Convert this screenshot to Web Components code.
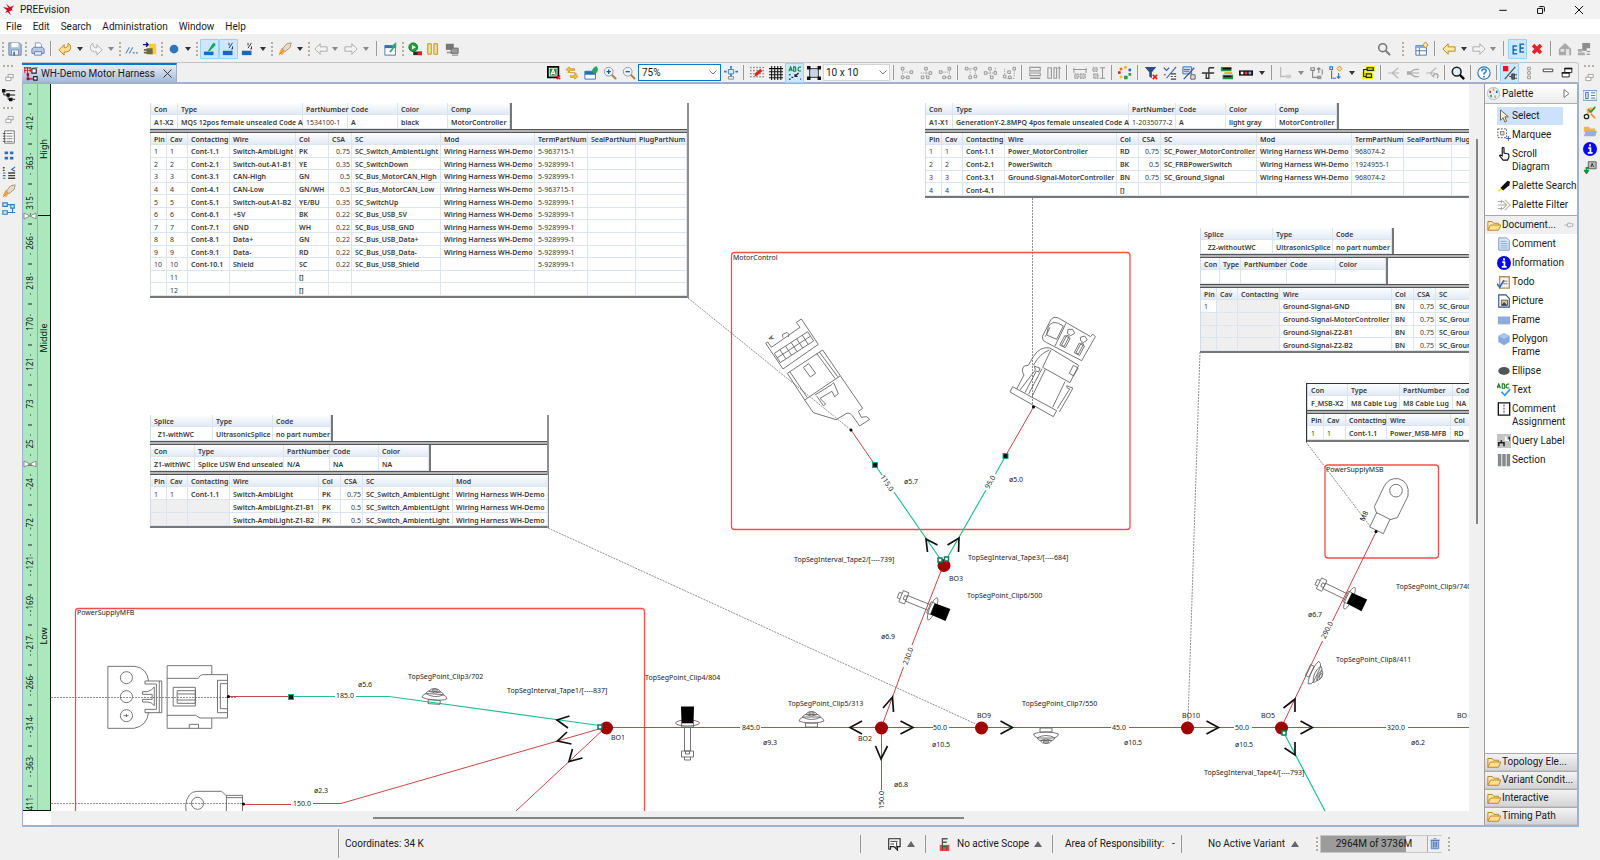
<!DOCTYPE html>
<html lang="en">
<head>
<meta charset="utf-8">
<title>PREEvision</title>
<style>
html,body{height:100%;margin:0}
body{font:10px/12px Roboto,"Liberation Sans",sans-serif;color:#1a1a1a;background:#f0f0f0;overflow:hidden}
</style>
</head>
<body>
<app-window></app-window>
<script>
const ICONS = {
  bird:'<path d="M1 5 8 6 5 1 10 5 15 3 12 7 13 9 9 10 11 15 7 11 4 12 6 9Z" fill="#c8102e"/>',
  save:'<path d="M1 1h12l2 2v12H1z" fill="#a9bfd8" stroke="#5c7fa5"/><path d="M4 1h8v5H4z" fill="#fff"/><path d="M4 9h8v6H4z" fill="#eef3f8" stroke="#6889ab"/><path d="M6 11h2v4H6z" fill="#4d7196"/>',
  print:'<path d="M5 1h5l2 2v5H5z" fill="#fff" stroke="#7d93b8"/><path d="M1 8 3 6h10l2 2v5H1z" fill="#b9c8e2" stroke="#5f7db0"/><path d="M4 11h8v4H4z" fill="#e4ebf7" stroke="#5f7db0"/>',
  undo:'<path d="M1 9 7 3v3.500h2Q12 6 11.500 1.500 15 3 14.500 7 14 11.500 7 11.500V15z" fill="#ffdf8f" stroke="#b67d10"/>',
  redo:'<path d="M15 9 9 3v3.500H7Q4 6 4.500 1.500 1 3 1.500 7 2 11.500 9 11.500V15z" fill="#f4f4f4" stroke="#a9a9a9"/>',
  lines:'<path d="M1 13 5 6M5 13 9 6" stroke="#5b8cc0" stroke-width="1.200"/><path d="M9 12.500h2M12.500 12.500h2" stroke="#3c78b4" stroke-width="1.500"/>',
  plug:'<path d="M7 2h8v12H7z" fill="#f2cf3a"/><path d="M0 3h6M3.500 0.500 6 3 3.500 5.500" stroke="#101080" fill="none" stroke-width="1.500"/><path d="M4 7h7v7H4zM1 8h3v2H1zM1 11h3v2H1z" fill="#6b6b45"/>',
  dot:'<circle cx="8" cy="8" r="5" fill="#2d76b8"/>',
  pen:'<path d="M1 11h11v4H1z" fill="#0d6fd0"/><path d="M5 11 7 8 11 2q2-2 3 0t-1 3L8 10z" fill="#18a85c"/>',
  frac:'<path d="M1 10h11v5H1z" fill="#1d66bd"/><path d="M8 1v3M12 1 8 7M12 5v3h-1.500" stroke="#222" fill="none"/>',
  rocket:'<path d="M1 13 4 7 9 6 8 11 4 14z" fill="#f0a43a"/><path d="M5 8 10 2 15 1 14 6 8 11z" fill="#e7dcca" stroke="#a98a61"/><path d="M1 15 4 12M4 15l2-2" stroke="#e8792a"/>',
  back:'<path d="M1 8 7 2v3.500h8v5H7V14z" fill="#f4f4f4" stroke="#a3a3a3"/>',
  fwd:'<path d="M15 8 9 2v3.500H1v5h8V14z" fill="#f4f4f4" stroke="#a3a3a3"/>',
  backy:'<path d="M1 8 7 2v3.500h8v5H7V14z" fill="#ffe9ad" stroke="#b67d10"/>',
  ext:'<path d="M1 4h12v11H1z" fill="#fff" stroke="#3a6ea5"/><path d="M1 4h12v3H1z" fill="#3a6ea5"/><path d="M6 11 10 6 8 5 14 0 14 7 12 6 8 12z" fill="#3aa569"/>',
  win:'<path d="M1 6h12v9H1z" fill="#fff" stroke="#2470b8"/><path d="M1 6h12v4H1z" fill="#2470b8"/><path d="m9 5 2-3 3-2 2 3-1 5-2-1-2 2z" fill="#27a567"/>',
  run:'<circle cx="6" cy="6" r="5" fill="#21a03c" stroke="#0e6a22"/><path d="M4.500 3.500 9 6 4.500 8.500z" fill="#fff"/><path d="M6 11h10v4H6z" fill="#282828"/><path d="M11 11h5v4h-5z" fill="#d92020"/>',
  pause:'<path d="M2 2h4v12H2zM9 2h4v12H9z" fill="#f7df8b" stroke="#b58a1a"/>',
  monitors:'<path d="M1 2h9v7H1z" fill="#777"/><path d="M2 11h6v2H2z" fill="#999"/><path d="M7 7h8v6H7z" fill="#9a9a9a" stroke="#666"/><path d="M8 15h7" stroke="#777"/>',
  search:'<circle cx="6.500" cy="6.500" r="4.500" fill="none" stroke="#777" stroke-width="1.800"/><path d="m10 10 5 5" stroke="#777" stroke-width="2.200"/>',
  searchb:'<circle cx="6.500" cy="6.500" r="5" fill="#dff1f5" stroke="#222" stroke-width="1.800"/><path d="m10 10 5 5" stroke="#000" stroke-width="2.800"/>',
  persp:'<path d="M1 4h12v11H1z" fill="#fff" stroke="#3a6ea5"/><path d="M1 4h12v3H1z" fill="#86aed6"/><path d="M5 7v8M1 10h12" stroke="#3a6ea5"/><path d="m12 0 3 3.500-3 3.500-3-3.500z" fill="#ffe59a" stroke="#b68a20"/>',
  ee:'<path d="M7 4.500H2.500v9H7M2.500 9h4M15 2.500h-4.500v9H15M10.500 7h4" stroke="#1d72b8" stroke-width="1.800" fill="none"/>',
  redx:'<path d="M2 5 5 2 8 5 11 2 14 5 11 8 14 11 11 14 8 11 5 14 2 11 5 8z" fill="#e8242a"/>',
  home:'<path d="M1 8 8 1l7 7v7H1z" fill="#a8a8a8"/><path d="M3 8h4v3H3zM9 8h4v7H9z" fill="#e4e4e4"/>',
  cubes:'<path d="M6 1h9v6h-4v3H6z" fill="#8d8d8d"/><path d="M1 8h5v3H1zM1 12h8v3H1z" fill="#aaa"/><path d="M11 11h4M11 14h4" stroke="#777"/>',
  harness:'<path d="M9 2h5v5H9zM11 11h4v4h-4z" fill="#fff" stroke="#222" stroke-width="1.300"/><path d="M4.500 8v5.500H11" stroke="#8c1830" fill="none" stroke-width="1.500"/><path d="M0 1h8M0 4h3M5 4h3M1 0v7M4 0v8M7 0v6M10 0h6" stroke="#d02040" stroke-width="1.200"/><path d="M3 7h3v3H3zM3 12h3v3H3z" fill="#8c1830"/>',
  close:'<path d="m3 3 10 10M13 3 3 13" stroke="#333" stroke-width="1.200"/>',
  label:'<path d="M1 1h12v12H1z" fill="#fff" stroke="#000" stroke-width="2"/><path d="M3 3h8v8H3z" fill="#2e8a35"/><path d="m4.500 10 2.500-6 2.500 6M5 8.500h4" stroke="#fff" fill="none" stroke-width="1.300"/><path d="m11 11 4 4M15 11l-4 4" stroke="#e21b1b" stroke-width="1.800"/>',
  swap:'<path d="M1 4 5 1v2h6v2H5v2zM15 12l-4-3v2H6v2h5v2zM3 7.500h8l3 2" fill="#f6c342" stroke="#b9851c" stroke-width=".7"/>',
  zoomin:'<circle cx="6.500" cy="6.500" r="5" fill="#f2f8ff" stroke="#8a8a9a"/><path d="M4 6.500h5M6.500 4v5" stroke="#1b4fae" stroke-width="1.500"/><path d="m10 10 5 5" stroke="#a8844a" stroke-width="2.200"/>',
  zoomout:'<circle cx="6.500" cy="6.500" r="5" fill="#f2f8ff" stroke="#8a8a9a"/><path d="M4 6.500h5" stroke="#1b4fae" stroke-width="1.500"/><path d="m10 10 5 5" stroke="#a8844a" stroke-width="2.200"/>',
  fit:'<path d="M5 4h6v5H5z" fill="#d6e9fb" stroke="#2f7cc4"/><path d="M0 6.500h3M13 6.500h3M8 0v3M8 9v3" stroke="#2f7cc4" stroke-width="2"/><path d="M5 12h6v3H5z" fill="#e8e8e8" stroke="#888"/>',
  redpen:'<path d="M1 1v14M4.500 1v14M8 1v14M11.500 1v14M15 1v14" stroke="#333" stroke-dasharray="1.500 2"/><path d="m5 12 1-4 6-5 2 3-6 5z" fill="#e3201b"/>',
  grid:'<path d="M3 0v16M6.500 0v16M10 0v16M13.500 0v16M0 3h16M0 6.500h16M0 10h16M0 13.500h16" stroke="#111" stroke-width="1.200"/>',
  abc:'<path d="M1 6 3 1 5 6M2 4.500h2M6.500 1v5h2q1-1 0-2.500.5-1.500-.5-2.500zM15 1.500q-3-1-3.500 2t3.500 2" stroke="#16801c" fill="none" stroke-width="1.200"/><path d="M1 10h2M4 13h2M1 15h2M12 8 8 12M8 9v3h3M14 15h1" stroke="#222" stroke-width="1.400" fill="none"/>',
  frame:'<path d="M3 3h10v10H3z" fill="#c9d5e4" stroke="#222"/><path d="M0 0h4v4H0zM12 0h4v4h-4zM0 12h4v4H0zM12 12h4v4h-4z" fill="#111"/>',
  al1:'<path d="M1.500 1.500h3v3h-3zM11.500 5.500h3v3h-3zM1.500 11.500h3v3h-3zM7.500 11.500h3v3h-3z" fill="none" stroke="#8d8d8d"/><path d="M3 5v6M5 7h6M5 13h2" stroke="#999" stroke-dasharray="1.500 1"/>',
  al2:'<path d="M6.500 1.500h3v3h-3zM11.500 6.500h3v3h-3zM2.500 11.500h3v3h-3zM8.500 11.500h3v3h-3z" fill="none" stroke="#8d8d8d"/><path d="M8 5v7M2 8h9" stroke="#999" stroke-dasharray="1.500 1"/>',
  al3:'<path d="M11.500 1.500h3v3h-3zM1.500 5.500h3v3h-3zM11.500 11.500h3v3h-3zM5.500 11.500h3v3h-3z" fill="none" stroke="#8d8d8d"/><path d="M13 5v6M5 7h7M9 13h2" stroke="#999" stroke-dasharray="1.500 1"/>',
  al4:'<path d="M1.500 1.500h3v3h-3zM5.500 11.500h3v3h-3zM11.500 10.500h3v3h-3zM11.500 1.500h3v3h-3z" fill="none" stroke="#8d8d8d"/><path d="M5 3h6M7 4v7M13 5v5" stroke="#999" stroke-dasharray="1.500 1"/>',
  al5:'<path d="M1.500 6.500h3v3h-3zM6.500 1.500h3v3h-3zM12.500 6.500h3v3h-3zM8.500 11.500h3v3h-3z" fill="none" stroke="#8d8d8d"/><path d="M5 8h7M8 5v7M14 2v4" stroke="#999" stroke-dasharray="1.500 1"/>',
  al6:'<path d="M1.500 10.500h3v3h-3zM6.500 5.500h3v3h-3zM12.500 1.500h3v3h-3zM7.500 11.500h3v3h-3z" fill="none" stroke="#8d8d8d"/><path d="M3 3v7M5 14h10M14 5v8" stroke="#999" stroke-dasharray="1.500 1"/>',
  same1:'<path d="M2 1.500h12v4H2zM2 8h12v3H2z" fill="none" stroke="#999" stroke-width="1.300"/><path d="M2 14h12" stroke="#888" stroke-width="1.500"/>',
  same2:'<path d="M1 2h4v12H1zM8 2h3v12H8z" fill="none" stroke="#999" stroke-width="1.300"/><path d="M14 1v14M12.500 3 14 1l1.500 2" stroke="#888" fill="none"/>',
  dist:'<path d="M1 2v6M15 2v6M1 4h14" stroke="#888"/><path d="M2 9h4v5H2zM8 9h6v5H8z" fill="#ccc" stroke="#888" stroke-dasharray="2 1"/>',
  distv:'<path d="M9 2h6M9 14h6M12 2v12" stroke="#888"/><path d="M1 2h5v4H1zM2 9h5v5H2z" fill="#ccc" stroke="#888" stroke-dasharray="2 1"/>',
  wheel:'<path d="M7 0h3v3H7z" fill="#f0b020"/><path d="M2 2h3v3H2z" fill="#f07020"/><path d="M0 6h3v3H0z" fill="#e02020"/><path d="M2 11h3v3H2z" fill="#f0c030"/><path d="M12 3h3v3h-3z" fill="#3060d0"/><path d="M12 8h3v3h-3zM7 11h4v4H7z" fill="#20a040"/>',
  filterx:'<path d="M1 1h13L9 7v7l-3-2V7z" fill="#2c4a90"/><path d="m10 10 5 5M15 10l-5 5" stroke="#e21b1b" stroke-width="2"/>',
  linkn:'<path d="M1 2l3 3 3-3M4 14 15 1" stroke="#3a62a8" stroke-width="1.300" fill="none"/><path d="M9 9h6M9 12h2M13 12h2M9 15h6M1 10h2" stroke="#444" stroke-width="1.300"/>',
  notel:'<path d="M1 1h10v8H1z" fill="#cfe0f5" stroke="#3a62a8"/><path d="M2 4h7M2 6h6" stroke="#3a62a8"/><path d="M2 15 14 2" stroke="#3a62a8" stroke-width="1.500"/><path d="M10 10h5v5h-5z" fill="#ddd" stroke="#555"/>',
  tree4:'<path d="M1 8h5v6M9 2v12H5M9 2h6M6 8h9" stroke="#333" stroke-width="1.500" fill="none"/>',
  greensw:'<path d="M1 1h12v5H1zM3 10h12v5H3z" fill="#1e9940"/><path d="M3 3h10M4 12h9" stroke="#111" stroke-width="1.800"/><path d="M5 8h9" stroke="#e0b020" stroke-width="2"/>',
  chain:'<path d="M0 5h16v6H0z" fill="#111"/><path d="M2 6.500h3v3H2z" fill="#fff"/><path d="M6.500 6.500h3v3h-3z" fill="#e64040"/><path d="M11 6.500h3v3h-3z" fill="#7fb1f0"/>',
  route1:'<path d="M3 1v11h6" stroke="#bbb" stroke-width="1.500" fill="none"/><path d="M9 10h6v4H9z" fill="#ccc"/>',
  route2:'<path d="M1 2h4v3H1zM3 5v8h5M10 2v6M8 4l2-2 2 2M14 4v6" stroke="#888" stroke-width="1.300" fill="none"/><path d="M8 11h5v4H8z" fill="#999"/>',
  route3:'<path d="M1 1h3v3H1zM3 5v9h5M11 8v6M9 12l2 2 2-2" stroke="#3a78c0" stroke-width="1.300" fill="none"/><path d="m12 0 3 3-3 3-3-3z" fill="#ffe59a" stroke="#b68a20"/>',
  route4:'<path d="M5 0h11v7h-5v2h3v6H1V7h4z" fill="#f3ef10"/><path d="M7 2h7v3H7zM7 4H3v8h3M6 9h6v4H6z" stroke="#222" stroke-width="1.300" fill="none"/>',
  fork1:'<path d="M1 8h5L13 2M6 8h8M6 8l7 6" stroke="#b5b5b5" stroke-width="1.300" fill="none"/>',
  fork2:'<path d="M1 6h5v4H1z" fill="#aaa"/><path d="M6 7Q8 3 15 4M6 8h9M6 9q2 4 9 3" stroke="#aaa" stroke-width="1.300" fill="none"/>',
  fork3:'<path d="M1 8h5L13 2M6 8h5M6 8l4 5" stroke="#b5b5b5" stroke-width="1.300" fill="none"/><path d="M10 12q0-4 3-3t1 5" stroke="#999" stroke-width="1.300" fill="none"/>',
  help:'<circle cx="8" cy="8" r="7" fill="#fff" stroke="#3277b5" stroke-width="1.300"/><path d="M5.500 6q0-2.500 2.500-2.500t2.500 2.200Q10.500 7 8 8.500V10M8 11.300V13" stroke="#3277b5" stroke-width="1.700" fill="none"/>',
  conn:'<path d="M0 0h6v6H0z" fill="#f01010"/><path d="M2 15 14 1" stroke="#555" stroke-width="1.500"/><path d="M10 9h3v6h-3zM13 10h3M13 14h3M7 12h3" stroke="#333" fill="#666"/>',
  vdots:'<path d="M6.500 1.500h3v3h-3zM6.500 6.500h3v3h-3zM6.500 11.500h3v3h-3z" fill="#fff" stroke="#888"/>',
  min:'<path d="M2.500 3.500h11v3h-11z" fill="#fff" stroke="#333"/>',
  rest:'<path d="M5.500 2.500h8v5h-8z" fill="#fff" stroke="#111"/><path d="M5 3h9" stroke="#111" stroke-width="1.600"/><path d="M2.500 7.500h8v5h-8z" fill="#fff" stroke="#111"/><path d="M2 8h9" stroke="#111" stroke-width="1.600"/>',
  restg:'<path d="M5.500 2.500h9v6h-9z" fill="#f8f8f8" stroke="#888" stroke-width="1.300"/><path d="M1.500 7.500h9v6h-9z" fill="#fff" stroke="#888" stroke-width="1.300"/>',
  tree:'<path d="M4 3h11M8 8h7M11 13h4" stroke="#555" stroke-width="1.500"/><path d="M0 1h4v4H0zM5 6h4v4H5zM8 11h4v4H8z" fill="#111"/><path d="M2 5v3h4M7 9v4h3" stroke="#111" fill="none"/>',
  listp:'<path d="M3 1h11v14H3z" fill="#fff" stroke="#666"/><path d="M5 4h7M5 7h7M5 10h7M5 13h7" stroke="#777"/><path d="M1 4h3M1 7h3M1 10h3M1 13h3" stroke="#444"/>',
  four:'<path d="M3 4h4v3H3zM9 4h4v3H9zM3 10h4v3H3zM9 10h4v3H9z" fill="#2f6fb5"/>',
  bars:'<path d="M7 8h8M7 11h8M7 14h8M1 2h2M1 5h2" stroke="#444" stroke-width="1.500"/><path d="M1 8h3M1 11h3M1 14h3M15 1l-4 3 4 2" stroke="#2f6fb5" stroke-width="1.300" fill="none"/>',
  blocks:'<path d="M1 1h5v4H1zM1 10h5v4H1zM10 3h4v4h-4z" fill="#d8e8f8" stroke="#2f7cc4" stroke-width="1.300"/><path d="M6 3h4M6 12h9M12 7v5" stroke="#2f7cc4" stroke-width="1.300"/>',
  props:'<path d="M0 3h16v11H0z" fill="#fff" stroke="#5b84b8"/><path d="M3 5h3v7H3zM9 5.500h5M9 8.500h5M9 11.500h5" fill="#dae6f5" stroke="#3a62a8"/>',
  check:'<path d="M4 4q4-4 10-1-6 6-9 6z" fill="#f5b060"/><path d="m6 4 3 3 5-6" stroke="#2a9a30" stroke-width="1.800" fill="none"/><circle cx="4" cy="12" r="2.500" fill="#fff" stroke="#222" stroke-width="1.500"/><path d="M9 9l5 5" stroke="#e88a30" stroke-width="2"/>',
  folderb:'<path d="M1 3h6l1 2h6v4H1z" fill="#e6b65a"/><path d="M3 8h13l-2 6H1z" fill="#8db2e3"/>',
  info:'<circle cx="8" cy="8" r="8" fill="#0606f0"/><path d="M8 2.500v2.500M6 7h2.500v5.500M5.500 12.500h5.500" stroke="#fff" stroke-width="2" fill="none"/>',
  arrA:'<path d="M6 2h9v8H6z" fill="#bbb" stroke="#555"/><path d="M9 8l1.500-4L12 8" stroke="#222" fill="none"/><path d="M7 9H4v4M1.500 11.500 4 15l2.500-3.500" stroke="#12923a" stroke-width="2" fill="none"/>',
  palette:'<circle cx="8" cy="8" r="7.500" fill="#e9eefa" stroke="#9fb1d6"/><g stroke-width="3"><path d="M7 3h2" stroke="#f0a020"/><path d="M3 6h2" stroke="#e03030"/><path d="M11 6h2" stroke="#3060d0"/><path d="M4 11h2" stroke="#20a040"/><path d="M9 12h2" stroke="#f0a020"/></g>',
  cursor:'<path d="M4 1v12l3-3 2 5 2-1-2-5h4z" fill="#fff3c8" stroke="#555"/>',
  marquee:'<path d="M1 1h10v10H1z" fill="none" stroke="#444" stroke-dasharray="2 1.500"/><path d="M4 4h4v4H4z" fill="#dbe6b8" stroke="#777"/><path d="M13 9v6M10 12h6" stroke="#2c5aa8"/>',
  hand:'<path d="M6 1q1-1 2 0v6l5 1q1 1 .5 4L12 15H7L3 10q0-1.500 3 0z" fill="#fff" stroke="#111" stroke-width="1.300"/>',
  torch:'<path d="M0 15 5 9l2 3z" fill="#f5e520"/><path d="M4 10 12 2l3 1-1 4-7 6z" fill="#111"/>',
  pfilter:'<path d="M1 4h6l4 4-4 4H1M1 8h9M5 2v4M5 10v4M9 2l6 6-6 6" stroke="#aaa" fill="none" stroke-width="1.200"/>',
  folder:'<path d="M1 14V4h5l1.500 2H13v3" fill="#ffe9b0" stroke="#b57a1c"/><path d="M1 14 4 8h12l-3 6z" fill="#ffe08f" stroke="#b57a1c"/>',
  pin:'<path d="M1 8h5M6 5h3v1h5v4H9v1H6z" fill="#fff" stroke="#888"/>',
  comment:'<path d="M2 1h9l3 3v11H2z" fill="#dce8fa" stroke="#6b8fc4"/><path d="M4 5h7M4 7.500h8M4 10h8M4 12.500h8" stroke="#7d9bd0"/>',
  todo:'<path d="M3 2h11v13H3z" fill="#f5f5f5" stroke="#b89055" stroke-width="1.500"/><path d="M7 7h5M7 10h5" stroke="#777"/><path d="m0 10 3 4 5-8" stroke="#2c6ab8" stroke-width="1.800" fill="none"/>',
  picture:'<path d="M2 1h8l4 4v10H2z" fill="#fff" stroke="#2b4f94" stroke-width="1.300"/><path d="M5 7h7v6H5z" fill="#dbc98c" stroke="#555"/><path d="m5 13 3-4 4 4z" fill="#345"/>',
  rect:'<path d="M1 4h14v9H1z" fill="#8fabdf"/>',
  hex:'<path d="m8 1 6.500 3.500v7L8 15l-6.500-3.500v-7z" fill="#86a9e0"/><path d="m8 1 6.500 3.500L8 8 1.500 4.500z" fill="#a9c4ee"/>',
  ell:'<ellipse cx="8" cy="8" rx="6.500" ry="4.500" fill="#4f5557"/>',
  text:'<path d="M0 6 2 1 4 6M1 4.500h2M6 1v5h2.500q1-1.500 0-2.500.5-1.500-.5-2.500zM14 1.500q-3-1-3.500 2t3.500 2" stroke="#16801c" fill="none" stroke-width="1.300"/><path d="m5 10 4 4 6-7" stroke="#2f9ae8" stroke-width="2" fill="none"/>',
  cassign:'<path d="M1.500 1h13v14h-13z" fill="#fff" stroke="#111" stroke-width="1.500"/><path d="M8 3v11" stroke="#111" stroke-dasharray="2 1.500"/>',
  query:'<path d="M0 0h16v16H0z" fill="#c4c4c4"/><path d="M2 14v-4h6v4M5 10V7M10 7h4V3" stroke="#222" stroke-width="1.800" fill="none"/><path d="M10 3v4h4" stroke="#fff" stroke-width="2" fill="none"/>',
  section:'<path d="M1 1h4v14H1zM6 1h4v14H6zM11 1h4v14h-4z" fill="#858a8d"/>',
  msg:'<path d="M2 2h13v9h-3v4l-4-4H4v3H2z" fill="#fff" stroke="#222" stroke-width="1.300"/><path d="M4 5h8M4 8h4M11 6v6M9.500 11l1.500 2" stroke="#222"/>',
  scope:'<path d="M2 9h11v7H2z" fill="#e84a4a"/><path d="M5 1v14M5 2h6M5 6h5M5 11h6M10 11v4" stroke="#555" stroke-width="1.500"/>',
  trash:'<path d="M3 4h10v11H3z" fill="#9dbbe5" stroke="#4a73b5"/><path d="M1.500 3.500h13M6 1.500h4M6 6v7M8 6v7M10 6v7" stroke="#4a73b5"/>',
  wmin:'<path d="M2 8.500h12" stroke="#111" stroke-width="1.600"/>',
  wmax:'<path d="M2.500 5.500h8v8h-8z" fill="none" stroke="#111" stroke-width="1.600"/><path d="M5 3q0-.5.500-.5H12q1.500 0 1.500 1.500v6.500" fill="none" stroke="#111" stroke-width="1.600"/>',
  wclose:'<path d="m1.500 1.500 13 13M14.500 1.500l-13 13" stroke="#111" stroke-width="1.600"/>'
};

const svg = n => `<svg viewBox="0 0 16 16" aria-hidden="true">${ICONS[n]}</svg>`;

/* Registers an element whose shadow root is cloned from a template. */
function define(name, css, html, setup) {
  const t = document.createElement('template');
  t.innerHTML = `<style>*{box-sizing:border-box}button,input,select{font:inherit;color:inherit;margin:0}${css}</style>${html}`;
  customElements.define(name, class extends HTMLElement {
    constructor() {
      super();
      this.attachShadow({ mode: 'open' }).append(t.content.cloneNode(true));
    }
    connectedCallback() { if (setup && !this.ready) { this.ready = true; setup.call(this, this.shadowRoot); } }
  });
}

/* One square tool button; "narrow" and "on" are set through attributes. */
define('tool-button', `
:host{display:block;flex:none;width:19px;height:20px}
:host([narrow]){width:17px}
:host([on]) button{background:#cce8ff;outline:1px solid #99d1ff;outline-offset:-1px}
button{display:flex;align-items:center;justify-content:center;width:100%;height:100%;padding:0;border:0;background:none;border-radius:1px}
svg{width:14px;height:14px;display:block}`,
'<button type="button"></button>', function (r) {
  const b = r.querySelector('button'), n = this.getAttribute('icon');
  b.innerHTML = svg(n); b.setAttribute('aria-label', n);
});

define('tool-caret', `
:host{display:flex;flex:none;width:var(--caret,12px);align-items:center;justify-content:center}
button{border:0;padding:0;background:none;width:100%;height:18px;display:flex;align-items:center;justify-content:center}
i{border:3px solid transparent;border-top:4px solid #333;border-bottom:0}
:host([dim]) i{border-top-color:#888}`,
'<button type="button" aria-label="More"><i></i></button>');

define('tool-sep', `
:host{display:flex;flex:none;width:var(--sep,9px);align-items:center;justify-content:center}
i{width:1px;height:15px;background:#9a9a9a}`, '<i></i>');

define('tool-grip', `
:host{display:flex;flex:none;width:6px;align-items:center;justify-content:center}
:host([wide]){width:20px}
i{width:2px;height:14px;background:repeating-linear-gradient(#b5ada4 0 2px,transparent 2px 4px)}`, '<i></i>');

/* Turns a short list of tokens into toolbar items. */
function items(list) {
  return list.trim().split(/\s+/).map(k =>
    k === '|' ? '<tool-sep></tool-sep>' :
    k === ':' ? '<tool-grip></tool-grip>' :
    k === '::' ? '<tool-grip wide></tool-grip>' :
    k === 'v' ? '<tool-caret></tool-caret>' :
    k === 'v-' ? '<tool-caret dim></tool-caret>' :
    k[0] === '+' ? `<tool-button on icon="${k.slice(1)}"></tool-button>` :
    k[0] === '.' ? `<tool-button narrow icon="${k.slice(1)}"></tool-button>` :
    `<tool-button icon="${k}"></tool-button>`).join('');
}

define('title-bar', `
:host{display:flex;height:19px;background:#f2f2f2;align-items:center;padding-left:2px}
.logo svg{width:13px;height:13px;display:block}
h1{font:inherit;margin:0 auto 0 5px}
button{width:38px;height:17px;border:0;background:none;padding:0;display:flex;align-items:center;justify-content:center}
button svg{width:10px;height:10px}
button:last-child{margin-right:2px}`,
`<span class="logo">${svg('bird')}</span><h1>PREEvision</h1>
<button type="button" aria-label="Minimize">${svg('wmin')}</button><button type="button" aria-label="Restore">${svg('wmax')}</button><button type="button" aria-label="Close">${svg('wclose')}</button>`);

define('menu-bar', `
:host{display:flex;height:16px;background:#fff;align-items:center;border-bottom:1px solid #f0f0f0}
button{border:0;background:none;padding:1px 5px 0 6px;line-height:14px}`,
['File','Edit','Search','Administration','Window','Help'].map(t => `<button type="button">${t}</button>`).join(''));

define('main-toolbar', `
:host{display:flex;height:27px;align-items:center;background:#f0f0f0;padding-right:7px}
.gap{flex:1}`,
items(': .save : .print | undo v redo v- : .lines plug : .dot v : +pen +frac frac v : rocket v : .back v- fwd v- | ext : .run pause monitors') +
'<span class="gap"></span>' +
items('search :: .persp | backy v .fwd v- | +ee redx | home cubes'));

define('side-rail', `
:host{display:block;flex:none;background:#f0f0f0}
nav{display:flex;flex-direction:column;align-items:center}
.d{height:7px;display:flex;align-items:center}
.d i{width:12px;height:2px;background:repeating-linear-gradient(90deg,#b5ada4 0 2px,transparent 2px 4px)}
button{border:0;background:none;padding:0;width:18px;height:18px;display:flex;align-items:center;justify-content:center}
button.s{height:17px}
svg{width:14px;height:14px}.s svg{width:9px;height:9px}`, '<nav></nav>', function (r) {
  r.querySelector('nav').innerHTML = this.getAttribute('icons').split(' ').map(k =>
    k === ':' ? '<span class="d"><i></i></span>' :
    `<button type="button" aria-label="${k}" class="${k === 'restg' ? 's' : ''}">${svg(k)}</button>`).join('');
});

define('editor-tabs', `
:host{display:flex;height:22px;background:#f0f0f0;border-top:1px solid #c4c4c4;border-right:1px solid #c4c4c4;border-bottom:2px solid #9db2ce;border-radius:0 4px 0 0;padding-right:2px;align-items:center;--caret:13px;--sep:7px}
.tab{align-self:stretch;display:flex;align-items:center;width:155px;background:linear-gradient(#e6edf7,#a4bad8);border-top:2px solid #0078d4;border-right:1px solid #a0aec0;padding-left:2px;gap:3px}
.tab svg{width:14px;height:14px;display:block}
.tab button{border:0;background:none;padding:0;margin-left:3px}
.tab button svg{width:13px;height:13px}
.gap{flex:1}
.combo{display:flex;height:17px;width:83px;border:1px solid #0078d4;background:#fff;align-items:center}
.combo input{flex:1;min-width:0;border:0;outline:0;padding:0 0 0 3px;background:none}
.combo button{border:0;background:none;padding:0;width:14px;display:flex;justify-content:center}
.chev{width:8px;height:5px}
.pick{position:relative;width:67px;height:17px}
.pick select{appearance:none;width:100%;height:100%;border:1px solid #d5d5d5;background:#fff;padding:0 2px;line-height:13px}
.pick svg{position:absolute;right:3px;top:6px}`,
`<div class="tab">${svg('harness')}<span>WH-Demo Motor Harness</span><button type="button" aria-label="Close tab">${svg('close')}</button></div>
<span class="gap"></span>` + items('.label swap win zoomin zoomout') +
`<div class="combo"><input value="75%" aria-label="Zoom"><button type="button" aria-label="Zoom levels"><svg class="chev" viewBox="0 0 8 5"><path d="m.5.5 3.500 3.500L7.500.5" fill="none" stroke="#777"/></svg></button></div>` +
items('fit | redpen grid +abc frame') +
`<div class="pick"><select aria-label="Grid size"><option>10 x 10</option></select><svg class="chev" viewBox="0 0 8 5"><path d="m.5.5 3.500 3.500L7.500.5" fill="none" stroke="#777"/></svg></div>` +
items('| al1 al2 al3 | al4 al5 al6 | same1 same2 | dist distv | wheel | filterx linkn notel tree4 greensw chain v | route1 v- route2 route3 v route4 | fork1 fork2 fork3 | searchb | help | +conn vdots min rest'));

/* Vertical scale with swim-lane names. */
define('lane-ruler', `
:host{display:block;flex:none;width:28px;background:#ace8be;border-right:1px solid #111;border-bottom:1px solid #111;overflow:hidden}
svg{display:block}
text{font:8px "Noto Sans",sans-serif;fill:#111;text-anchor:middle}
.n{font-size:9px}`, '<svg width="27" height="727"></svg>', function (r) {
  const vals = [412,363,315,266,218,170,121,73,25,-24,-72,-121,-169,-217,-266,-314,-363,-411];
  let s = '<path d="M14.500 0v727" stroke="#8cb89a"/>';
  s += '<path d="M5 20h4" stroke="#222"/><path d="M6 10h2" stroke="#222"/>';
  vals.forEach((v, i) => {
    const y = Math.round(40 + i * 40.1);
    s += `<text transform="translate(10 ${y - 1}) rotate(-90)">${v}</text><path d="M7 ${y - 10}h1M7 ${y + 10}h1M5 ${y + 20}h4" stroke="#222"/>`;
  });
  for (const [t, y] of [['High', 65], ['Middle', 254], ['Low', 552]])
    s += `<text class="n" transform="translate(24 ${y}) rotate(-90)">${t}</text>`;
  s += '<path d="M15 131.500h13" stroke="#111"/>';
  for (const y of [132, 380]) s += `<path d="M1 ${y - 3}l6 3 6-3v6l-6-3-6 3z" fill="#fff" stroke="#888"/>`;
  r.querySelector('svg').innerHTML = s;
});

/* Wiring table: stacked sections divided by grey bars. */
define('harness-table', `
:host{position:absolute;display:block;font:600 7px/9px "Noto Sans",sans-serif;color:#383838}
.box{border-right:2px solid transparent}
:host([framed]) .box{border-right-color:#909090}
:host([outlined]) .box{border-top:1px solid #333;border-left:1px solid #333}
table{table-layout:fixed;border-collapse:separate;border-spacing:0;background:#fff;border-left:1px solid #cfdaea}
table.short{border-right:2px solid #777}
th,td{padding:2px 0 0 3px;text-align:left;white-space:nowrap;font-weight:600;border-right:1px solid #dbe4f1;border-bottom:1px solid #dbe4f1}
th{background:linear-gradient(#fdfeff,#e2eaf5);color:#383838}
td.n{font-weight:400}td.r{text-align:right;padding:2px 1px 0 0;font-weight:400}
td.g{background:#efefef}
hr{margin:0;height:4px;border:0;border-top:1px solid #555;border-bottom:1px solid #555;background:#b4b4b4}
hr:last-child{height:2px;border:0;background:#777}`, '<div class="box"></div>', function (r) {
  const d = this.data;
  r.querySelector('.box').innerHTML = d.sections.map((s, i) => {
    const w = s.cols.reduce((a, b) => a + b, 0);
    const h = s.h || 26;
    return `<table class="${i < d.sections.length - 1 ? 'short' : ''}" style="width:${w}px;height:${h}px"><colgroup>${s.cols.map(c => `<col style="width:${c}px">`).join('')}</colgroup>` +
      `<thead><tr>${s.head.split('|').map(t => `<th>${t}</th>`).join('')}</tr></thead><tbody>` +
      s.rows.map(row => `<tr>${row.split('|').map(t => {
        const c = t === '#' ? 'g' : /^0\.\d+$/.test(t) ? 'r' : /^[\d-]+$/.test(t) ? 'n' : '';
        return `<td class="${c}">${t === '#' ? '' : t}</td>`;
      }).join('')}</tr>`).join('') + '</tbody></table>';
  }).join('<hr>') + '<hr>';
});

const M = 'Wiring Harness WH-Demo';
const TABLES = [
  { x: 99, y: 19, w: 539, framed: 1, sections: [
    { cols: [27,125,45,50,50,62], head: 'Con|Type|PartNumber|Code|Color|Comp', rows: ['A1-X2|MQS 12pos female unsealed Code A|1534100-1|A|black|MotorController'] },
    { cols: [16,21,42,66,33,23,89,94,53,48,51], h: 163, head: 'Pin|Cav|Contacting|Wire|Col|CSA|SC|Mod|TermPartNum|SealPartNum|PlugPartNum', rows: [
      `1|1|Cont-1.1|Switch-AmbiLight|PK|0.75|SC_Switch_AmbientLight|${M}|5-963715-1||`,
      `2|2|Cont-2.1|Switch-out-A1-B1|YE|0.35|SC_SwitchDown|${M}|5-928999-1||`,
      `3|3|Cont-3.1|CAN-High|GN|0.5|SC_Bus_MotorCAN_High|${M}|5-928999-1||`,
      `4|4|Cont-4.1|CAN-Low|GN/WH|0.5|SC_Bus_MotorCAN_Low|${M}|5-963715-1||`,
      `5|5|Cont-5.1|Switch-out-A1-B2|YE/BU|0.35|SC_SwitchUp|${M}|5-928999-1||`,
      `6|6|Cont-6.1|+5V|BK|0.22|SC_Bus_USB_5V|${M}|5-928999-1||`,
      `7|7|Cont-7.1|GND|WH|0.22|SC_Bus_USB_GND|${M}|5-928999-1||`,
      `8|8|Cont-8.1|Data+|GN|0.22|SC_Bus_USB_Data+|${M}|5-928999-1||`,
      `9|9|Cont-9.1|Data-|RD|0.22|SC_Bus_USB_Data-|${M}|5-928999-1||`,
      '10|10|Cont-10.1|Shield|SC|0.22|SC_Bus_USB_Shield||5-928999-1||',
      '|11|||[]||||||', '|12|||[]||||||'] }] },
  { x: 874, y: 19, w: 592, sections: [
    { cols: [27,176,47,50,50,61], head: 'Con|Type|PartNumber|Code|Color|Comp', rows: ['A1-X1|GenerationY-2.8MPQ 4pos female unsealed Code A|1-2035077-2|A|light gray|MotorController'] },
    { cols: [16,21,42,112,22,22,96,95,52,48,64], h: 63, head: 'Pin|Cav|Contacting|Wire|Col|CSA|SC|Mod|TermPartNum|SealPartNum|PlugPartNum', rows: [
      `1|1|Cont-1.1|Power_MotorController|RD|0.75|SC_Power_MotorController|${M}|968074-2||`,
      `2|2|Cont-2.1|PowerSwitch|BK|0.5|SC_FRBPowerSwitch|${M}|1924955-1||`,
      `3|3|Cont-3.1|Ground-Signal-MotorController|BN|0.75|SC_Ground_Signal|${M}|968074-2||`,
      '4|4|Cont-4.1||[]||||||'] }] },
  { x: 1149, y: 144, w: 360, sections: [
    { cols: [72,60,59], head: 'Splice|Type|Code', rows: ['&nbsp; Z2-withoutWC|UltrasonicSplice|no part number'] },
    { cols: [19,21,46,49,50], head: 'Con|Type|PartNumber|Code|Color', rows: ['||||'] },
    { cols: [16,21,42,112,22,22,120], h: 63, head: 'Pin|Cav|Contacting|Wire|Col|CSA|SC', rows: [
      '1|#|#|Ground-Signal-GND|BN|0.75|SC_Ground_Signal', '#|#|#|Ground-Signal-MotorController|BN|0.75|SC_Ground_Signal',
      '#|#|#|Ground-Signal-Z2-B1|BN|0.75|SC_Ground_Signal', '#|#|#|Ground-Signal-Z2-B2|BN|0.75|SC_Ground_Signal'] }] },
  { x: 1255, y: 299, w: 250, outlined: 1, sections: [
    { cols: [40,52,53,61], head: 'Con|Type|PartNumber|Code', rows: ['F_MSB-X2|M8 Cable Lug|M8 Cable Lug|NA'] },
    { cols: [16,22,41,64,61], h: 26, head: 'Pin|Cav|Contacting|Wire|Col', rows: ['1|1|Cont-1.1|Power_MSB-MFB|RD'] }] },
  { x: 99, y: 331, w: 399, framed: 1, sections: [
    { cols: [62,60,58], head: 'Splice|Type|Code', rows: ['&nbsp; Z1-withWC|UltrasonicSplice|no part number'] },
    { cols: [44,89,46,49,50], head: 'Con|Type|PartNumber|Code|Color', rows: ['Z1-withWC|Splice USW End unsealed|N/A|NA|NA'] },
    { cols: [16,21,42,89,22,22,90,95], h: 51, head: 'Pin|Cav|Contacting|Wire|Col|CSA|SC|Mod', rows: [
      `1|1|Cont-1.1|Switch-AmbiLight|PK|0.75|SC_Switch_AmbientLight|${M}`,
      `#|#|#|Switch-AmbiLight-Z1-B1|PK|0.5|SC_Switch_AmbientLight|${M}`,
      `#|#|#|Switch-AmbiLight-Z1-B2|PK|0.5|SC_Switch_AmbientLight|${M}`] }] }
];

/* The free canvas: tables, frames, wire segments, nodes and labels. */
define('harness-canvas', `
:host{display:block;position:relative;flex:1;min-width:0;background:#fff;overflow:hidden}
svg{position:absolute;left:0;top:0;width:1440px;height:760px}
text{font:7px "Noto Sans",sans-serif;fill:#222}
.m{text-anchor:middle}
.red{stroke:#c64646;fill:none}.grn{stroke:#25bd92;fill:none;stroke-width:1.200}
.dash{stroke:#909090;stroke-dasharray:2 1;fill:none}
.fr{stroke:#fb4b4b;fill:none;stroke-width:1.300}
.arw{stroke:#111;fill:none;stroke-width:1.700}
.dev,.dev *{stroke:#666;fill:none;vector-effect:non-scaling-stroke;stroke-width:.9}
.node{fill:#a00000}.sq{fill:#111;stroke:#1aa783}.sqo{fill:#fff;stroke:#0a7e62;stroke-width:1.500}`,
'<svg role="img" aria-label="Wiring harness" viewBox="51 84 1440 760"></svg>', function (r) {
  const P = (c, d) => `<path class="${c}" d="${d}"/>`;
  const T = (x, y, t) => `<text x="${x}" y="${y + 2}">${t}</text>`;
  const R = (x, y, a, t) => `<text class="m" transform="translate(${x} ${y}) rotate(${a})" y="2.500">${t}</text>`;
  const bolt = (x, y, a) => `<g transform="translate(${x} ${y}) rotate(${a})"><g class="dev"><ellipse cy="-5" rx="12" ry="3"/><path d="M-6-5H6V-1H-6zM-3-1V23H3V-1M-6 23H6V29H-6zM-3 29V32H3V29M-2 23v3h4v-3"/></g><path d="M-6.500-21.500 6.500-21.500 6-5-6-5z" fill="#000"/></g>`;
  const disc = (x, y, a) => `<g class="dev" transform="translate(${x} ${y}) rotate(${a})"><path d="M-6-4H6V0H-6zM-12.500-6Q-12-9-8-10H8Q12-9 12.500-6 9-4 0-4T-12.500-6zM-9-10Q-8-12-6-12.500H6Q8-12 9-10 5-7.500 0-7.500T-9-10zM-6-12.500Q-4-15.500 0-15.500T6-12.500Q0-9.500-6-12.500"/><ellipse cy="-14" rx="3" ry="1"/></g>`;
  let s = '';
  s += P('dash', 'M688 298 851 430M1032.500 198V407M1200 352 1188 722M1306 442 1370 526M548 528 978 725M51 697.500H236M51 803.500H243');
  s += '<rect class="fr" x="731.500" y="252.500" width="398.500" height="277" rx="3"/><rect class="fr" x="75.500" y="608.500" width="569" height="300" rx="3"/><rect class="fr" x="1325" y="465" width="113.500" height="93" rx="3"/>';
  s += P('red', 'M606 727.500H740M761 727.500H933M949 727.500H1111M1129 727.500H1234M1252 727.500H1386M1408 727.500H1500M881.500 727 903.500 667M912 645 943 566M881.500 727V790M606 727 341 803.500H313M291 804.500H243M606 727 516 811M228 696.500H290M851 430 875 465M1033.500 407 1005.500 456M1281.500 727 1322.500 641M1332.500 621 1376 532');
  s += P('grn', 'M290 696.500H335M356 696.500H389L603 726M875 465 882 475M894 492 941 560M1005.500 456 995.500 474M986 490 946 560M1284 733 1325 811');
  /* MQS connector, 12 positions, and MPQ connector, 4 positions */
  s += `<g class="dev" transform="translate(700 290) scale(.33333)">
<path d="M197 160 203 156 214 172 300 112 289 97 304 87 355 163 249 237ZM249 143 247 134 261 127 267 133 265 141"/>
<g transform="translate(223 190) rotate(-33)"><path d="M0 0H119V33H0ZM0 16H119M20 0V33M40 0V33M60 0V33M80 0V33M100 0V33"/></g>
<path d="M262 250 368 180 488 355 475 364 484 382 500 380 509 388 479 408 458 378Q445 362 432 375L408 389 340 368 314 330ZM350 190 405 265M358 186 413 260M314 330 420 258M270 246 322 323M310 232 326 221 347 250 331 261Z"/>
<path d="M345 315 395 284 401 278 415 311 404 320 396 304 360 325 377 342 370 347 350 318"/>
<path d="M1027 140 1052 90Q1060 78 1075 84L1172 140 1178 132 1186 140 1145 212 1040 158Q1025 152 1027 140ZM1098 100 1065 168M1045 110Q1055 92 1075 100L1090 108 1070 148 1040 135ZM1036 140 1050 112M1104 118 1118 118 1124 130 1112 137 1102 130ZM1141 142 1154 138 1162 150 1150 158 1142 152Z"/>
<g transform="translate(1095 155) rotate(28)"><rect x="-9" y="-16" width="18" height="32"/><rect x="-4" y="-20" width="8" height="34"/></g>
<g transform="translate(1138 178) rotate(28)"><rect x="-9" y="-16" width="18" height="32"/><rect x="-4" y="-20" width="8" height="34"/></g>
<path d="M950 297 972 255Q962 240 973 228L985 226 1000 200Q1020 168 1050 174L1136 226 1110 278 1028 232 1053 180M938 290 1070 362 1060 380 930 306ZM1003 228 1020 235 1016 246 1009 243 975 308M1003 228 1006 240 960 300M1036 238 997 318M1026 236 986 312M1095 275 1058 352M1100 287 1118 294 1116 300 1078 366M1100 287 1102 294 1109 297 1072 356M1120 226 1134 234 1121 258 1108 250ZM1000 226Q1020 190 1048 180"/></g>`;
  /* lug in the MSB supply */
  s += `<g class="dev" transform="translate(1160 290) scale(.33333)"><path d="M650 670 643 650 672 590Q685 563 715 566 750 575 744 618L712 683 690 689M650 668 690 688 670 731 629 711Z"/><circle cx="708" cy="602" r="19"/></g>`;
  /* MFB supply connector and lug */
  s += `<g class="dev" transform="translate(0 580) scale(.35714 .33333)">
<path d="M416 303Q412 265 378 259H302V445H375Q412 438 416 397"/><ellipse cx="354" cy="293" rx="17" ry="18"/><ellipse cx="354" cy="350" rx="17" ry="18"/><ellipse cx="354" cy="407" rx="17" ry="18"/><path d="M346 407H360M354 402V411"/>
<path d="M406 303H453V398H406V388H438V312H406ZM446 303V398M399 335H412Q425 332 432 321V377Q425 366 412 366H399V358H426V343H399Z"/>
<path d="M593 284V257H468V445H593V415M468 295H555Q560 284 567 284H637V414H560L548 406H468M530 445V433H556V445M485 322H547V378H485ZM496 332H547V370H496ZM496 342H547M496 360H547M637 301H609V398H637M637 311H617V386H637"/>
<path d="M526 720Q512 670 530 645 538 634 552 634H620L634 647M634 646H679V720M634 646V720M634 653H679"/><ellipse cx="553" cy="670" rx="17" ry="18"/></g>`;
  s += bolt(687.5, 728, 0) + bolt(928, 607, 112) + bolt(1345, 596, 116);
  s += disc(811.5, 727, 0) + disc(1046, 728, 180) + disc(434, 704, 4) + disc(1308, 670, 115);
  s += P('arw', 'M937.500 545 926 539 927.500 552M947.500 545 959 538 958.500 552M569.500 716 557 720 568 728M567 732 557.500 741 571.500 744M572.500 749 569 761.500 582.500 758M862 721 850 727.500 862 734M883 708 892.500 697 893.500 712M900.500 721 913 727.500 900.500 734M875.500 746 881 759 887.500 746M1000.500 721 1012.500 727.500 1000.500 734M1206.500 721 1218.500 727.500 1206.500 734M1300.500 721 1312.500 727.500 1300.500 734M1283.500 708 1295 699 1295 712M1284.500 748 1295 755 1295 742');
  for (const [x, y] of [[606.5,728],[881.5,728],[981.5,728],[1187.5,728],[1281.5,728],[944,565.5]]) s += `<circle class="node" cx="${x}" cy="${y}" r="6.500"/>`;
  for (const [x, y] of [[291,697],[875,465],[1005.5,456]]) s += `<rect class="sq" x="${x - 2.5}" y="${y - 2.5}" width="5" height="5"/>`;
  for (const [x, y] of [[940,560],[946.5,559],[600,727],[1284,733]]) s += `<rect class="sqo" x="${x - 2}" y="${y - 2}" width="4" height="4"/>`;
  for (const [x, y] of [[228.5,696.5],[243.5,804],[851,430],[1033.5,407],[1376,531.5]]) s += `<circle cx="${x}" cy="${y}" r="1.500"/>`;
  s += [[733,258,'MotorControl'],[77,613,'PowerSupplyMFB'],[1326,470,'PowerSupplyMSB'],
    [794,560,'TopSegInterval_Tape2/[----739]'],[968,558,'TopSegInterval_Tape3/[----684]'],[949,579,'BO3'],[967,596,'TopSegPoint_Clip6/500'],
    [904,482,'ø5.7'],[1009,480,'ø5.0'],[881,637,'ø6.9'],[894,785,'ø6.8'],[763,743,'ø9.3'],[932,745,'ø10.5'],
    [742,728,'845.0'],[933,728,'50.0'],[611,738,'BO1'],[858,739,'BO2'],[977,716,'BO9'],
    [645,678,'TopSegPoint_Clip4/804'],[788,704,'TopSegPoint_Clip5/313'],[1022,704,'TopSegPoint_Clip7/550'],[408,677,'TopSegPoint_Clip3/702'],
    [507,691,'TopSegInterval_Tape1/[----837]'],[358,685,'ø5.6'],[314,791,'ø2.3'],[336,696,'185.0'],[293,804,'150.0'],
    [1396,587,'TopSegPoint_Clip9/740'],[1336,660,'TopSegPoint_Clip8/411'],[1308,615,'ø6.7'],[1182,716,'BO10'],[1261,716,'BO5'],
    [1124,743,'ø10.5'],[1235,745,'ø10.5'],[1411,743,'ø6.2'],[1112,728,'45.0'],[1235,728,'50.0'],[1387,728,'320.0'],[1457,716,'BO'],
    [1204,773,'TopSegInterval_Tape4/[----793]']].map(a => T(...a)).join('');
  s += R(887, 483, 56, '115.0') + R(990, 482, -60, '95.0') + R(908, 656, -70, '230.0') + R(881, 800, -90, '150.0') + R(1327, 630, -64, '290.0') + R(1364, 516, -64, 'M8') + R(771, 338, -115, 'A');
  r.querySelector('svg').innerHTML = s;
  for (const d of TABLES) {
    const t = document.createElement('harness-table');
    t.data = d;
    t.style.cssText = `left:${d.x}px;top:${d.y}px;width:${d.w}px`;
    if (d.framed) t.setAttribute('framed', '');
    if (d.outlined) t.setAttribute('outlined', '');
    r.insertBefore(t, r.querySelector('svg'));
  }
});

define('palette-item', `
:host{display:block;padding-left:12px}
button{display:flex;width:66px;border:0;background:none;padding:3px 0;text-align:left;line-height:13px;gap:1px;white-space:nowrap}
:host([on]) button{background:#cde2fa;box-shadow:inset 0 1px #fff}
.i{height:13px}
svg{display:block;width:14px;height:14px}`,
'<button type="button"><span class="i"></span><span><slot></slot></span></button>', function (r) {
  r.querySelector('.i').innerHTML = svg(this.getAttribute('icon'));
});

define('palette-drawer', `
:host{display:flex;height:18px;align-items:center;padding-left:2px;border-top:1px solid #aaa;border-bottom:1px solid #c4c4c4;background:linear-gradient(#f3f3f3,#d4d4d4);white-space:nowrap}
:host([open]){background:#f0f0f0;border-bottom:0;height:19px}
button{display:flex;align-items:center;gap:1px;border:0;background:none;padding:0;flex:1}
svg{width:14px;height:14px;flex:none}
.p{width:10px;height:10px;margin-right:3px;display:none}
:host([open]) .p{display:block}`,
`<button type="button">${svg('folder')}<slot></slot></button><span>${svg('pin').replace('<svg', '<svg class="p"')}</span>`);

define('tool-palette', `
:host{display:flex;flex-direction:column;flex:none;width:93px;background:#fff;border-left:1px solid #a0a0a0;overflow:hidden}
h2{font:inherit;margin:0;height:20px;display:flex;align-items:center;gap:2px;padding:0 7px 0 2px;background:linear-gradient(#fff,#ececec);border-bottom:1px solid #b0b0b0}
h2 svg{width:13px;height:13px}h2 .a{margin-left:auto;width:7px;height:9px}
.tools{height:111px;padding-top:2px}
.fill{flex:1}`,
`<h2>${svg('palette')}Palette<svg class="a" viewBox="0 0 7 9"><path d="M1 .5v8l5-4z" fill="#fff" stroke="#777"/></svg></h2>
<div class="tools"><palette-item on icon="cursor">Select</palette-item><palette-item icon="marquee">Marquee</palette-item><palette-item icon="hand">Scroll<br>Diagram</palette-item><palette-item icon="torch">Palette Search</palette-item><palette-item icon="pfilter">Palette Filter</palette-item></div>
<palette-drawer open>Document...</palette-drawer>
<palette-item icon="comment">Comment</palette-item><palette-item icon="info">Information</palette-item><palette-item icon="todo">Todo</palette-item><palette-item icon="picture">Picture</palette-item><palette-item icon="rect">Frame</palette-item><palette-item icon="hex">Polygon<br>Frame</palette-item><palette-item icon="ell">Ellipse</palette-item><palette-item icon="text">Text</palette-item><palette-item icon="cassign">Comment<br>Assignment</palette-item><palette-item icon="query">Query Label</palette-item><palette-item icon="section">Section</palette-item>
<div class="fill"></div>
<palette-drawer>Topology Ele...</palette-drawer><palette-drawer>Variant Condit...</palette-drawer><palette-drawer>Interactive</palette-drawer><palette-drawer>Timing Path</palette-drawer>`);

define('diagram-editor', `
:host{display:flex;flex-direction:column;flex:1;min-width:0}
.body{flex:1;display:flex;min-height:0;border:solid #9db2ce;border-width:0 2px 2px 1px}
.view{flex:1;min-width:0;display:grid;grid-template:minmax(0,1fr) 14px/28px minmax(0,1fr) 15px}
harness-canvas{height:auto}
.v,.h{background:#f0f0f0;display:flex}
.v{flex-direction:column;align-items:center;grid-row:span 2}
.h{align-items:center}
.c{background:#fff}
.v i{width:2px;background:#858585;flex:0 0 52%;margin-top:55px}
.h i{height:2px;background:#858585;flex:0 0 41.7%;margin-left:22.7%}`,
`<editor-tabs></editor-tabs><div class="body"><div class="view"><lane-ruler></lane-ruler><harness-canvas></harness-canvas><div class="v"><i></i></div><div class="c"></div><div class="h"><i></i></div></div><tool-palette></tool-palette></div>`);

define('status-bar', `
:host{display:flex;height:33px;align-items:center;background:#f0f0f0;white-space:nowrap}
.s{width:1px;height:18px;background:#999;flex:none}
.tall{height:29px}
.a{flex:1;padding-left:6px}
.lead{width:338px}.rest{width:148px}
.cell{display:flex;align-items:center;gap:6px;padding-left:12px}
.cell svg{width:14px;height:14px}
.msg{width:64px;padding-left:26px}
.scope{width:126px;gap:5px}
.area{width:128px;gap:8px}
.variant{width:132px;padding-left:26px}
.up{border:4px solid transparent;border-bottom:6px solid #666;border-top:0}
.heap{display:flex;height:18px;width:122px;border:1px solid #c8c8c8;border-right:0;background:#f0f0f0;margin-right:4px}
.heap span{flex:1;line-height:16px;text-align:center;background:linear-gradient(90deg,#9c9c9c 80%,#ececec 80%)}
.heap button{width:15px;border:0;border-left:1px solid #aaa;background:none;padding:0;display:flex;align-items:center;justify-content:center}
.heap svg{width:12px;height:13px}`,
`<span class="lead"></span><span class="s tall"></span><span class="a">Coordinates: 34 K</span>
<span class="s"></span><span class="cell msg">${svg('msg')}<i class="up"></i></span>
<span class="s"></span><span class="cell scope">${svg('scope')}<span>No active Scope</span><i class="up"></i></span>
<span class="s"></span><span class="cell area"><span>Area of Responsibility:</span><span>-</span></span>
<span class="s"></span><span class="cell variant"><span>No Active Variant</span><i class="up"></i></span>
<tool-grip></tool-grip><span class="heap"><span>2964M of 3736M</span><button type="button" aria-label="Run garbage collector">${svg('trash')}</button></span><tool-grip></tool-grip><span class="rest"></span>`);

define('app-window', `
:host{display:flex;flex-direction:column;height:100vh}
.mid{flex:1;display:flex;min-height:0}
.l{width:22px;padding-right:4px;box-sizing:border-box}.r{width:21px}
diagram-editor{min-height:0}`,
`<title-bar></title-bar><menu-bar></menu-bar><main-toolbar></main-toolbar>
<div class="mid"><side-rail class="l" icons=": restg tree : restg listp four bars rocket blocks"></side-rail><diagram-editor></diagram-editor><side-rail class="r" icons=": restg props check folderb info arrA"></side-rail></div>
<status-bar></status-bar>`);
</script>
</body>
</html>
